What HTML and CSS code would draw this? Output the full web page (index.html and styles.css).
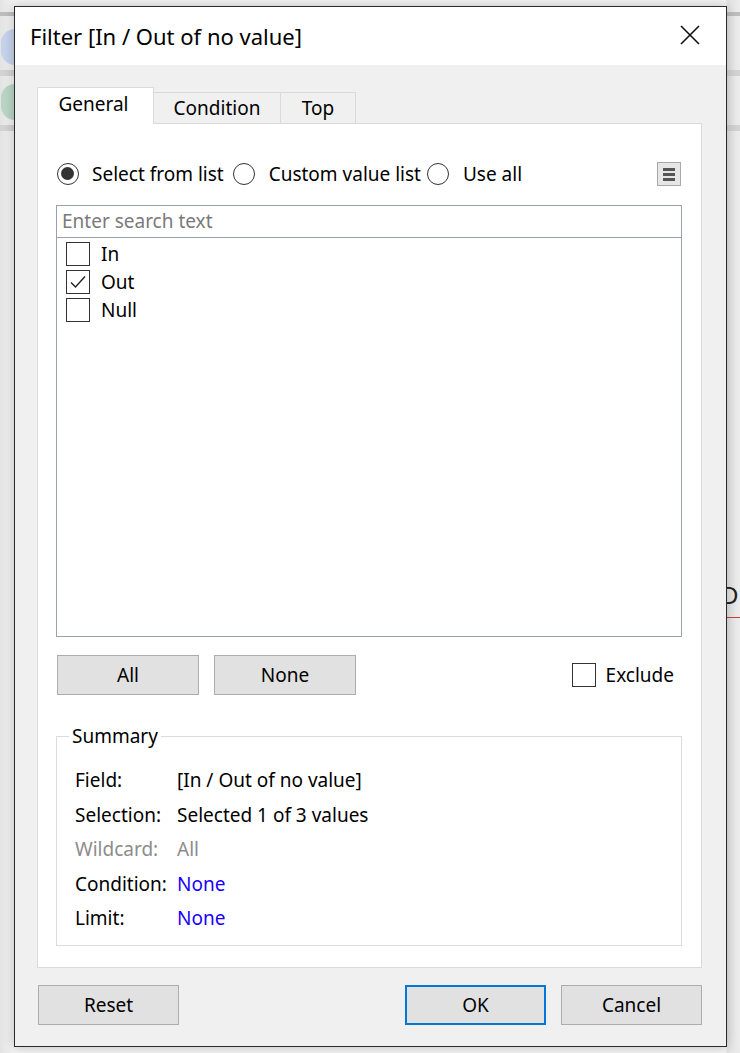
FILE: index.html
```html
<!DOCTYPE html>
<html>
<head>
<meta charset="utf-8">
<link rel="stylesheet" href="styles.css">
</head>
<body>
<div class="app">
  <div class="app-line l1"></div>
  <div class="app-line l2"></div>
  <div class="app-line l3"></div>
  <div class="pill blue"></div>
  <div class="pill green"></div>
  <div class="app-text">D</div>
  <div class="red-line"></div>
</div>

<div class="dialog">
  <div class="titlebar">
    <span class="title">Filter [In / Out of no value]</span>
    <svg class="close" width="22" height="22" viewBox="0 0 22 22"><path d="M2 2 L20 20 M20 2 L2 20" stroke="#111" stroke-width="1.6" fill="none"/></svg>
  </div>
  <div class="content">
    <div class="tabs">
      <div class="tab active">General</div>
      <div class="tab">Condition</div>
      <div class="tab">Top</div>
    </div>
    <div class="panel">
      <div class="radio-row">
        <label class="radio"><span class="dot checked"></span>Select from list</label>
        <label class="radio"><span class="dot"></span>Custom value list</label>
        <label class="radio"><span class="dot"></span>Use all</label>
        <span class="menu-btn"><span></span><span></span><span></span></span>
      </div>
      <div class="listbox">
        <div class="search">Enter search text</div>
        <div class="items">
          <div class="item"><span class="cb"></span>In</div>
          <div class="item"><span class="cb"><svg width="22" height="22" viewBox="0 0 22 22"><path d="M4 11.5 L8.5 16 L18 5.5" stroke="#222" stroke-width="1.4" fill="none"/></svg></span>Out</div>
          <div class="item"><span class="cb"></span>Null</div>
        </div>
      </div>
      <div class="btn-row">
        <button class="btn">All</button>
        <button class="btn">None</button>
        <label class="exclude"><span class="cb"></span>Exclude</label>
      </div>
      <fieldset class="summary">
        <legend>Summary</legend>
        <div class="srow"><span class="k">Field:</span><span>[In / Out of no value]</span></div>
        <div class="srow"><span class="k">Selection:</span><span>Selected 1 of 3 values</span></div>
        <div class="srow dim"><span class="k">Wildcard:</span><span>All</span></div>
        <div class="srow"><span class="k">Condition:</span><span class="link">None</span></div>
        <div class="srow"><span class="k">Limit:</span><span class="link">None</span></div>
      </fieldset>
    </div>
    <div class="footer">
      <button class="btn">Reset</button>
      <div class="spacer"></div>
      <button class="btn primary">OK</button>
      <button class="btn">Cancel</button>
    </div>
  </div>
</div>
</body>
</html>
```

FILE: styles.css
```css
html, body {
  margin: 0;
  padding: 0;
}
body {
  width: 740px;
  height: 1053px;
  background: #e6e6e6;
  font-family: "Noto Sans", "Open Sans", sans-serif;
  overflow: hidden;
  position: relative;
}
.app {
  position: absolute;
  inset: 0;
  background: linear-gradient(to right, #e3e3e3 0, #f3f3f3 14px, #f3f3f3 726px, #e2e2e2 727px, #ececec 740px);
}
.app-line {
  position: absolute;
  left: 0;
  right: 0;
  height: 6px;
  background: #d2d2d2;
}
.l1 { top: 12px; height: 4px; background: #bdbdbd; }
.l2 { top: 70px; }
.l3 { top: 125px; }
.pill {
  position: absolute;
  left: 1px;
  width: 30px;
  height: 36px;
  border-radius: 14px;
}
.pill.blue { top: 29px; background: #c4d2ea; }
.pill.green { top: 84px; background: #b9d5c3; }
.app-text {
  position: absolute;
  left: 721px;
  top: 578px;
  font-size: 24px;
  color: #222;
}
.red-line {
  position: absolute;
  left: 727px;
  right: 0;
  top: 617px;
  height: 1px;
  background: #c84040;
}

.dialog {
  position: absolute;
  left: 14px;
  top: 6px;
  width: 711px;
  height: 1039px;
  border: 1px solid #2a2a2a;
  background: #f0f0f0;
  box-shadow: 0 0 10px rgba(0,0,0,0.22);
  display: flex;
  flex-direction: column;
  color: #000;
}
.titlebar {
  height: 58px;
  background: #fff;
  display: flex;
  align-items: center;
  padding: 0 24px 0 15px;
}
.title {
  flex: 1;
  font-size: 22px;
  color: #000;
}
.close {
  display: block;
  margin-right: 1px;
  margin-top: -2px;
}
.content {
  flex: 1;
  padding: 22px 24px 0 22px;
  display: flex;
  flex-direction: column;
}
.tabs {
  display: flex;
  align-items: flex-end;
  height: 36px;
  position: relative;
  z-index: 1;
}
.tab {
  height: 31px;
  border: 1px solid #d9d9d9;
  border-bottom: none;
  background: #f0f0f0;
  font-size: 19px;
  display: flex;
  align-items: center;
  justify-content: center;
  box-sizing: border-box;
  margin-left: -1px;
}
.tab:nth-child(1) { width: 117px; margin-left: 0; padding-right: 4px; }
.tab:nth-child(2) { width: 128px; }
.tab:nth-child(3) { width: 76px; }
.tab.active {
  height: 37px;
  background: #fff;
  padding-bottom: 4px;
  margin-bottom: -1px;
}
.panel {
  height: 845px;
  box-sizing: border-box;
  background: #fff;
  border: 1px solid #d9d9d9;
  padding: 0 19px 0 18px;
  display: flex;
  flex-direction: column;
}
.radio-row {
  display: flex;
  align-items: center;
  height: 24px;
  margin-top: 38px;
  font-size: 19px;
}
.radio {
  display: flex;
  align-items: center;
  margin-right: 6px;
}
.dot {
  width: 22px;
  height: 22px;
  border: 1.5px solid #333;
  border-radius: 50%;
  box-sizing: border-box;
  margin-right: 14px;
  position: relative;
  flex: none;
}
.dot.checked::after {
  content: "";
  position: absolute;
  left: 3px;
  top: 3px;
  width: 13px;
  height: 13px;
  border-radius: 50%;
  background: #333;
}
.radio:first-child { margin-right: 9px; }
.radio:first-child .dot { margin-left: 1px; margin-right: 13px; }
.menu-btn {
  margin-left: auto;
  width: 24px;
  height: 24px;
  box-sizing: border-box;
  border: 1.5px solid #a8a8a8;
  background: #e6e6e6;
  display: flex;
  flex-direction: column;
  justify-content: center;
  align-items: center;
  gap: 2px;
  margin-right: 1px;
}
.menu-btn span {
  width: 12px;
  height: 3px;
  background: #555;
}
.listbox {
  margin-top: 19px;
  height: 432px;
  border: 1.5px solid #9ca0a8;
  box-sizing: border-box;
}
.search {
  height: 32px;
  border-bottom: 1.5px solid #9ca0a8;
  box-sizing: border-box;
  color: #7a7a7a;
  font-size: 19px;
  padding-left: 5px;
  line-height: 30px;
}
.items {
  padding: 2px 0 0 9px;
}
.item {
  display: flex;
  align-items: center;
  height: 28px;
  font-size: 19px;
}
.cb {
  width: 24px;
  height: 24px;
  box-sizing: border-box;
  border: 1.5px solid #333;
  background: #fff;
  margin-right: 11px;
  display: flex;
  align-items: center;
  justify-content: center;
  flex: none;
}
.cb svg { display: block; }
.btn-row {
  display: flex;
  align-items: center;
  margin-top: 18px;
  padding-left: 1px;
  height: 40px;
}
.btn {
  font-family: inherit;
  font-size: 19px;
  color: #000;
  width: 142px;
  height: 40px;
  box-sizing: border-box;
  background: #e1e1e1;
  border: 1.5px solid #adadad;
  padding: 0;
  margin: 0;
}
.btn-row .btn + .btn { margin-left: 15px; }
.exclude {
  margin-left: auto;
  display: flex;
  align-items: center;
  font-size: 19px;
  margin-right: 8px;
}
.exclude .cb { margin-right: 10px; }
.summary {
  margin: 28px 0 0 0;
  padding: 14px 0 0 18px;
  height: 223px;
  box-sizing: border-box;
  border: 1.5px solid #dcdcdc;
}
.summary legend {
  font-size: 19px;
  padding: 0 3px;
  margin-left: -6px;
}
.srow {
  display: flex;
  font-size: 19px;
  height: 34.5px;
  align-items: center;
}
.srow .k { width: 102px; flex: none; }
.srow.dim { color: #8c8c8c; }
.link { color: #1a00ff; }
.footer {
  display: flex;
  margin-top: 17px;
  padding-left: 1px;
}
.footer .btn { width: 141px; height: 40px; }
.spacer { flex: 1; }
.footer .btn.primary {
  border: 2px solid #0078d7;
  margin-right: 15px;
}
```
